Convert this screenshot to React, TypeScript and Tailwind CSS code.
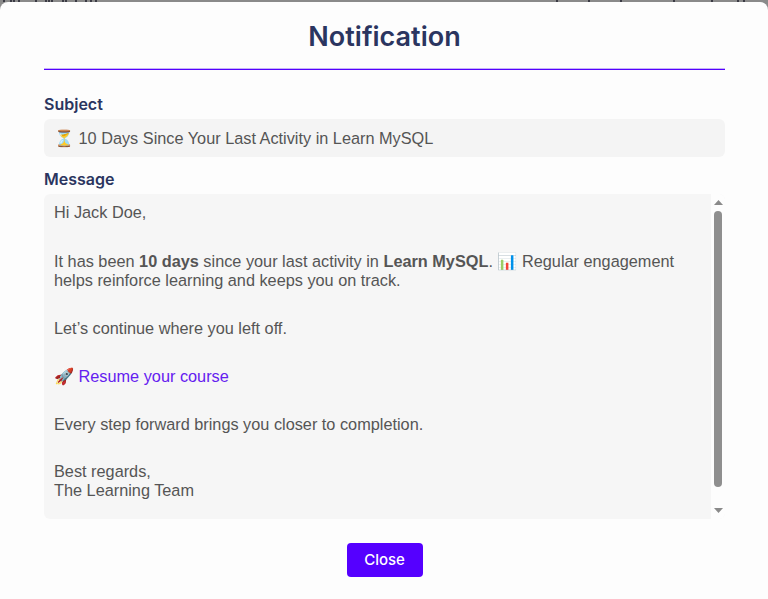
import React from 'react';

const labelClass = 'block text-base font-semibold text-[#2b3560] leading-6';

// bits of the page behind the dialog that stick out above it
const behindBits = [3, 10, 13, 18, 35, 45, 48, 51, 62, 65, 75, 85, 90, 95, 556, 588, 620, 673, 711, 737, 743];

function Scrollbar() {
  return (
    <div className="w-[14px] shrink-0 bg-[#fdfdfd] flex flex-col items-center py-[6px]">
      <svg width="9" height="5" viewBox="0 0 9 5" className="shrink-0"><path d="M4.5 0 9 5H0z" fill="#8a8a8a" /></svg>
      <div className="mt-[6px] w-2 h-[276px] rounded-full bg-[#8f8f8f]" />
      <svg width="9" height="5" viewBox="0 0 9 5" className="shrink-0 mt-[21px]"><path d="M0 0h9L4.5 5z" fill="#8a8a8a" /></svg>
    </div>
  );
}

export default function App() {
  return (
    <div className="h-[599px] w-full overflow-hidden bg-[#8a8a8a] font-['Inter',sans-serif]">
      <svg width="768" height="2" className="block">
        {behindBits.map(x => <rect key={x} x={x} y="0" width="2" height="2" fill="#3a3a44" />)}
      </svg>
      <div className="h-[597px] bg-[#fdfdfd] rounded-t-lg pl-11 pr-[43px]">
        <h2 className="pt-[17px] pb-[13px] text-center text-[27px] leading-[36px] font-semibold text-[#2b3560]">
          Notification
        </h2>
        {/* divider: soft tint above the line */}
        <div className="h-[2px] border-t border-b border-t-[#c4b2f7] border-b-[#5500ff]" />

        <label className={`${labelClass} mt-[22px]`}>Subject</label>
        <div className="mt-[3px] h-[38px] flex items-center px-[10px] rounded-md bg-[#f4f4f4] text-[16.3px] text-[#555] font-['Liberation_Sans',sans-serif]">
          ⏳ 10 Days Since Your Last Activity in Learn MySQL
        </div>

        <label className={`${labelClass} mt-[10px]`}>Message</label>
        <div className="mt-[3px] h-[325px] flex overflow-hidden rounded-md bg-[#f6f6f6] text-[16.3px] leading-[19px] text-[#555] font-['Liberation_Sans',sans-serif]">
          <div className="flex-1 pl-[10px] pr-[30px] pt-[9px]">
            <p>Hi Jack Doe,</p>
            <p className="mt-[30px]">
              It has been <strong>10 days</strong> since your last activity in <strong>Learn MySQL</strong>. 📊 Regular engagement helps reinforce learning and keeps you on track.
            </p>
            <p className="mt-[29px]">Let’s continue where you left off.</p>
            <p className="mt-[29px]">
              🚀 <a className="text-[#6420f0]">Resume your course</a>
            </p>
            <p className="mt-[29px]">Every step forward brings you closer to completion.</p>
            <p className="mt-[28px]">Best regards,<br />The Learning Team</p>
          </div>
          <Scrollbar />
        </div>

        <div className="mt-6 flex justify-center">
          <button className="w-[76px] h-[34px] rounded bg-[#5500ff] text-white text-[15px] font-medium">Close</button>
        </div>
      </div>
    </div>
  );
}
